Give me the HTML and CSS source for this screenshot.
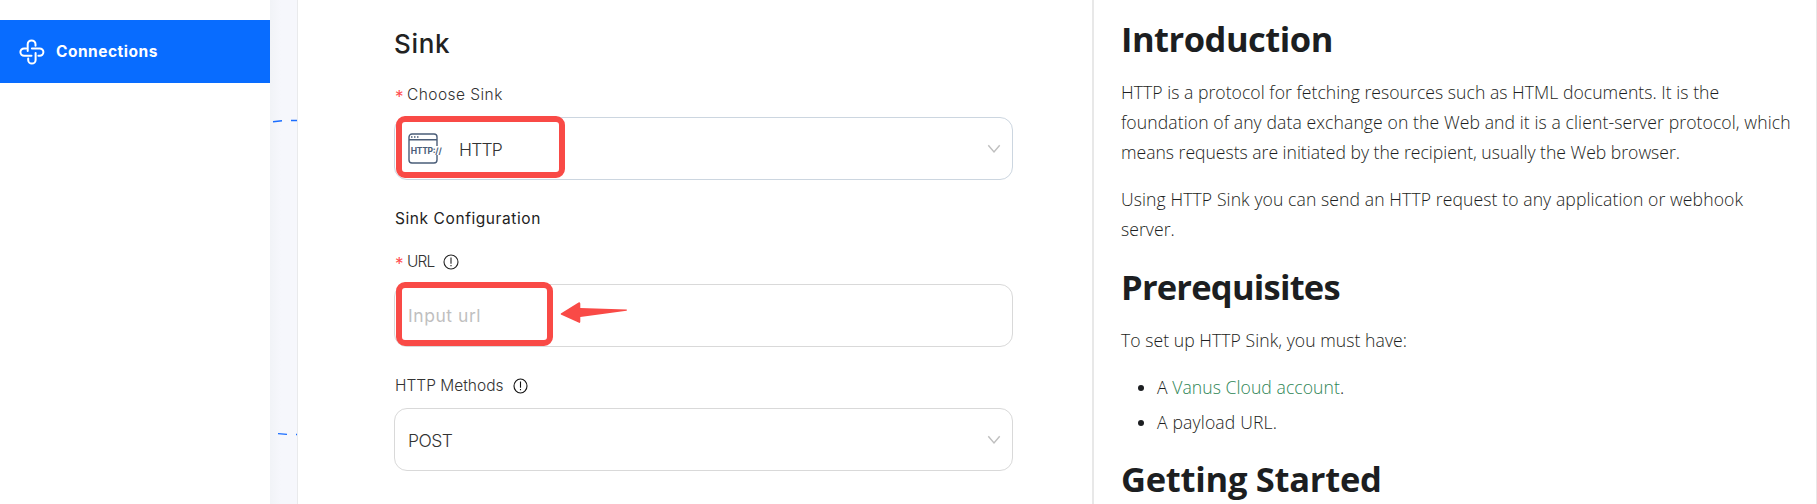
FILE: index.html
```html
<!DOCTYPE html>
<html lang="en">
<head>
<meta charset="utf-8">
<title>Connections</title>
<link rel="stylesheet" href="styles.css">
</head>
<body>
<div class="app">
  <nav class="sidebar">
    <a class="nav-item">
      <svg class="nav-icon" width="26" height="26" viewBox="0 0 26 26" fill="none" stroke="#fff" stroke-width="2" stroke-linecap="round">
        <path d="M16.5 6.8V5.3a3.9 3.9 0 0 0-7.8 0V12"/>
        <path d="M7.2 9.4H5.1a3.7 3.7 0 0 0 0 7.4H12.5"/>
        <path d="M9.2 19.6v1.3a3.7 3.7 0 0 0 7.4 0V14"/>
        <path d="M19.4 16.8h1.3a3.7 3.7 0 0 0 0-7.4H12.9"/>
      </svg>
      <span class="nav-text">Connections</span>
    </a>
  </nav>
  <div class="canvas">
    <svg width="27" height="504" viewBox="0 0 27 504" fill="none" stroke="#1a6dff" stroke-width="1.4">
      <path d="M3 121.7L12 120.7M21 120.5H27"/>
      <path d="M8 433.6L17 434.4M26 434.5H27"/>
    </svg>
  </div>
  <main class="form">
    <h1 class="title"><span class="t-title">Sink</span></h1>
    <div class="label"><span class="star">*</span><span class="t-choose">Choose Sink</span></div>
    <div class="field field-blue">
      <svg class="http-icon" width="36" height="32" viewBox="0 0 36 32" fill="none" stroke="#4a5d78" stroke-width="1.4">
        <path d="M1 12V4a3 3 0 0 1 3-3H26a3 3 0 0 1 3 3V13M1 11V27a3 3 0 0 0 3 3H26a3 3 0 0 0 3-3V22M1 6.7H29"/>
        <path d="M3 4H4.5M6 4H7.5M9 4H10.5" stroke-width="1.3"/>
        <text class="http-text" x="2.7" y="21" textLength="31" lengthAdjust="spacing">HTTP://</text>
      </svg>
      <span class="value t-http">HTTP</span>
      <svg class="chevron" width="14" height="10" viewBox="0 0 14 10" fill="none" stroke="#bfbfbf" stroke-width="1.4"><path d="M1.3 1.2L7 8L12.7 1.2"/></svg>
      <div class="mark mark-select"></div>
    </div>
    <div class="label section"><span class="t-config">Sink Configuration</span></div>
    <div class="label label-url"><span class="star">*</span><span class="t-url">URL</span>
      <svg class="info info-url" width="16" height="16" viewBox="0 0 16 16" fill="none" stroke="#222" stroke-width="1.1"><circle cx="8" cy="8" r="7"/><path d="M8 3.5V9.7M8 11V12.3"/></svg>
    </div>
    <div class="field">
      <span class="placeholder t-input">Input url</span>
      <div class="mark mark-input"></div>
      <svg class="arrow" width="68" height="22" viewBox="0 0 68 22" fill="#f94a46"><path d="M.8 11.6L18.5.5q1.800-1 1.800 1.200V6L66.500 7.500q1 .5 0 1.200L20.300 15V19.600q0 2-1.800 1L.8 12.400z"/></svg>
    </div>
    <div class="label label-methods"><span class="t-methods">HTTP Methods</span>
      <svg class="info" width="15" height="16" viewBox="0 0 15 16" fill="none" stroke="#111" stroke-width="1.1"><ellipse cx="7.5" cy="8" rx="6.5" ry="7"/><path d="M7.5 3.500V9.700M7.5 11V12.300"/></svg>
    </div>
    <div class="field">
      <span class="value t-post">POST</span>
      <svg class="chevron" width="14" height="10" viewBox="0 0 14 10" fill="none" stroke="#bfbfbf" stroke-width="1.4"><path d="M1.3 1.2L7 8L12.7 1.2"/></svg>
    </div>
  </main>
  <article class="doc">
    <h2><span class="h-intro">Introduction</span></h2>
    <p><span class="l1">HTTP is a protocol for fetching resources such as HTML documents. It is the</span><br><span class="l2">foundation of any data exchange on the Web and it is a client-server protocol, which</span><br><span class="l3">means requests are initiated by the recipient, usually the Web browser.</span></p>
    <p><span class="l4">Using HTTP Sink you can send an HTTP request to any application or webhook</span><br><span class="l5">server.</span></p>
    <h2><span class="h-pre">Prerequisites</span></h2>
    <p><span class="l6">To set up HTTP Sink, you must have:</span></p>
    <ul>
      <li><span class="l7">A <a>Vanus Cloud account</a>.</span></li>
      <li><span class="l8">A payload URL.</span></li>
    </ul>
    <h2 class="last"><span class="h-start">Getting Started</span></h2>
  </article>
</div>
</body>
</html>
```
FILE: styles.css
```css
* { box-sizing: border-box; }
body { margin: 0; background: #fff; overflow: hidden; }
.app { display: flex; width: 1817px; height: 504px; overflow: hidden; white-space: nowrap; font-family: Inter, sans-serif; }
.sidebar { width: 270px; padding-top: 20px; }
.nav-item { display: flex; align-items: center; height: 63px; padding-left: 18.5px; background: #086cff; color: #fff; }
.nav-text { margin-left: 11.5px; font-size: 15.5px; font-weight: 700; letter-spacing: .5px; }
.canvas { width: 28px; background: linear-gradient(90deg, #f1f3f7, #f6f7fc 40%); border-right: 1px solid #e9eaec; }
.canvas svg { display: block; }
.form { width: 794px; padding: 24px 78px 0 96px; color: #333; }
.title { margin: 0 0 18px; height: 40px; font-size: 26px; line-height: 40px; font-weight: 450; color: #222; letter-spacing: .7px; }
.label { display: flex; align-items: center; height: 24px; margin-bottom: 11px; font-size: 15.5px; line-height: 24px; color: #333; font-weight: 300; padding: 2px 0 0 1px; }
.star { width: 12px; color: #ff4d4f; font-size: 17px; font-weight: 400; padding-top: 4px; }
.t-choose { letter-spacing: .45px; }
.t-config { letter-spacing: .58px; }
.t-url { letter-spacing: -.9px; }
.section { margin: 26px 0 19px; font-weight: 400; color: #222; }
.label-methods { margin-top: 26px; }
.info { margin-left: 9px; }
.field { position: relative; display: flex; align-items: center; width: 619px; height: 63px; padding: 0 11px 0 13px; border: 1px solid #d9d9d9; border-radius: 13px; font-size: 17.5px; }
.field-blue { border-color: #ccd6e0; }
.http-text { font: 700 8.500px Inter, sans-serif; fill: #4a5d78; stroke: none; }
.value { color: #333; padding-top: 2px; font-weight: 300; }
.t-http { margin-left: 15px; letter-spacing: -.8px; }
.t-post { letter-spacing: -.5px; }
.placeholder { color: #bfbfbf; letter-spacing: .55px; }
.chevron { margin-left: auto; }
.mark { position: absolute; border: 6px solid #f94a46; border-radius: 9px; left: 1px; }
.mark-select { top: -2px; width: 169px; height: 62px; }
.mark-input { top: -3px; width: 157px; height: 64px; }
.arrow { position: absolute; left: 165px; top: 17px; }
.doc { width: 725px; border-left: 2px solid #e8e8e8; border-right: 1px solid #e8e8e8; padding: 17px 0 0 27px; font-family: "Open Sans", sans-serif; font-size: 17.6px; font-weight: 350; line-height: 30px; letter-spacing: .05px; color: #1c1e21; }
.doc h2 { margin: 0 0 16px; font-size: 34.5px; line-height: 44px; font-weight: 700; }
.doc p { margin: 0 0 17px; }
.doc p + h2 { margin-top: 21px; }
.doc ul { margin: 0; padding-left: 36px; }
.doc li { height: 30px; margin-bottom: 5px; }
.doc a { color: #2e8555; }
.doc h2.last { margin-top: 20px; }
.h-intro { letter-spacing: -.5px; }
.h-pre { letter-spacing: -.78px; }
.h-start { letter-spacing: -.27px; }
.l1 { letter-spacing: .035px; }
.l2 { letter-spacing: .09px; }
.l3 { letter-spacing: -.02px; }
.l4 { letter-spacing: .09px; }
.l8 { letter-spacing: .15px; }
```
